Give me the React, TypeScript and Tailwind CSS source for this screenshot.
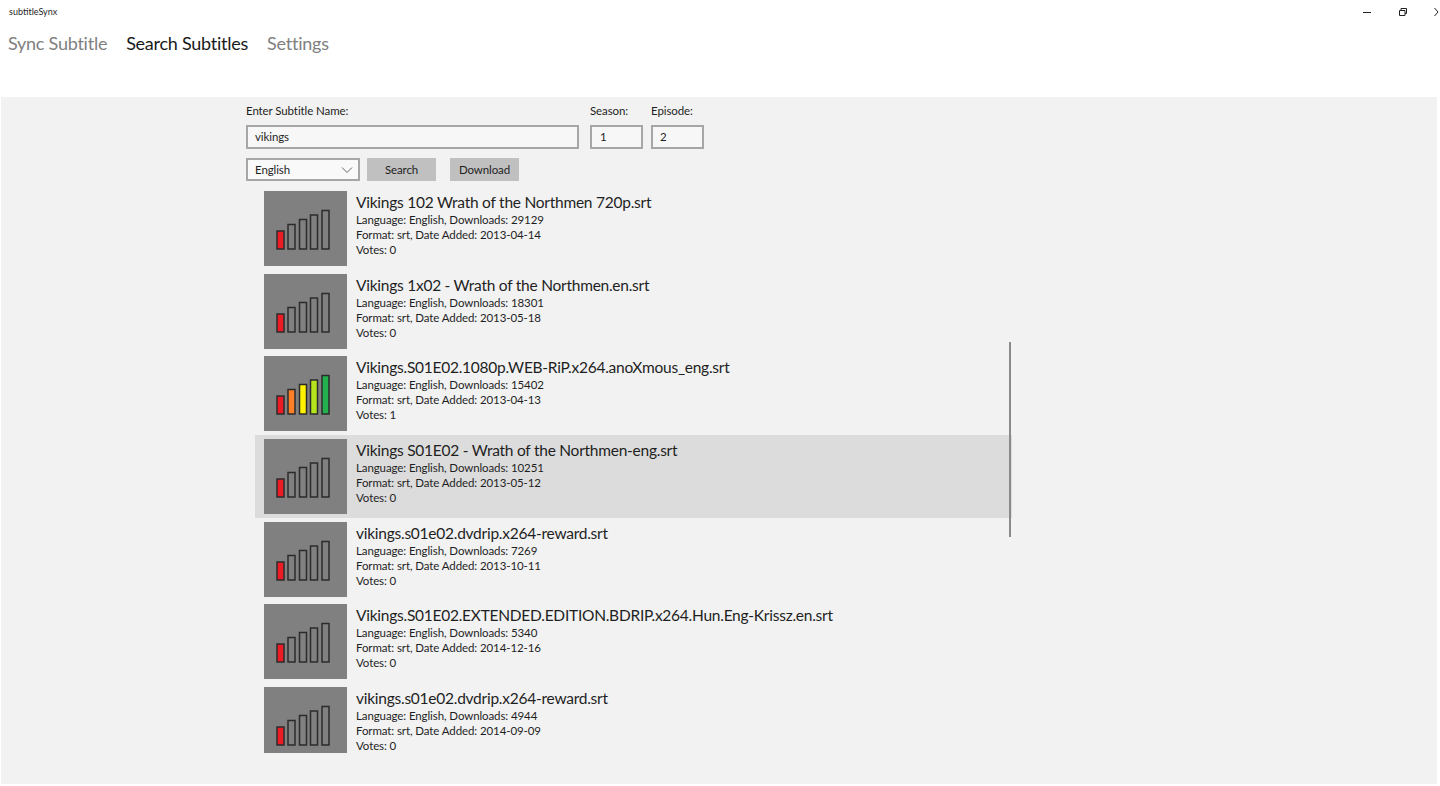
const results = [
  { title: "Vikings 102 Wrath of the Northmen 720p.srt", downloads: 29129, date: "2013-04-14", votes: 0 },
  { title: "Vikings 1x02 - Wrath of the Northmen.en.srt", downloads: 18301, date: "2013-05-18", votes: 0 },
  { title: "Vikings.S01E02.1080p.WEB-RiP.x264.anoXmous_eng.srt", downloads: 15402, date: "2013-04-13", votes: 1 },
  { title: "Vikings S01E02 - Wrath of the Northmen-eng.srt", downloads: 10251, date: "2013-05-12", votes: 0, selected: true },
  { title: "vikings.s01e02.dvdrip.x264-reward.srt", downloads: 7269, date: "2013-10-11", votes: 0 },
  { title: "Vikings.S01E02.EXTENDED.EDITION.BDRIP.x264.Hun.Eng-Krissz.en.srt", downloads: 5340, date: "2014-12-16", votes: 0 },
  { title: "vikings.s01e02.dvdrip.x264-reward.srt", downloads: 4944, date: "2014-09-09", votes: 0 },
];

const bars = [
  { x: 13, y: 40, h: 18, color: "#ed1c24" },
  { x: 24, y: 33.5, h: 24.5, color: "#ffffff00" },
  { x: 35.5, y: 28.5, h: 29.5, color: "#ffffff00" },
  { x: 46.5, y: 24, h: 34, color: "#ffffff00" },
  { x: 58, y: 19.5, h: 38.5, color: "#ffffff00" },
];
const ratedColors = ["#ed1c24", "#ff7f27", "#fff200", "#b5e61d", "#22b14c"];

function Rating({ votes }: { votes: number }) {
  return (
    <svg width="83" height="75" viewBox="0 0 83 75" className="shrink-0 bg-[#808080]">
      {bars.map((b, i) => (
        <rect
          key={i}
          x={b.x}
          y={b.y}
          width="7"
          height={b.h}
          fill={votes > 0 ? ratedColors[i] : b.color}
          stroke="#2b2b2b"
          strokeWidth="1.5"
        />
      ))}
    </svg>
  );
}

export default function App() {
  return (
    <div className="h-[786px] overflow-hidden bg-white font-['Lato',sans-serif] text-[#1f1f1f]">
      <header className="h-[97px]">
        <div className="flex h-[24px] items-center justify-between pl-[9px]">
          <span className="text-[9px]">subtitleSynx</span>
          <div className="flex items-center pr-px text-[#222]">
            <svg width="10" height="10" viewBox="0 0 10 10" className="mr-[26px]">
              <path d="M1 5.5h8" stroke="currentColor" />
            </svg>
            <svg width="10" height="10" viewBox="0 0 10 10" className="mr-[26px]">
              <path d="M1.5 3.500h5.500v5h-5.500zM3 3.500v-2h5.500v5h-1.500" stroke="currentColor" fill="none" />
            </svg>
            <svg width="5" height="10" viewBox="0 0 5 10">
              <path d="M0.500 1l3.500 4-3.500 4" stroke="currentColor" fill="none" />
            </svg>
          </div>
        </div>
        <nav className="mt-[5px] flex gap-[19px] pl-[8px] text-[18px] leading-[28px] tracking-[-0.25px]">
          <span className="text-[#808080]">Sync Subtitle</span>
          <span className="text-[#1a1a1a]">Search Subtitles</span>
          <span className="text-[#808080]">Settings</span>
        </nav>
      </header>

      <main className="ml-px mr-[3px] flex h-[687px] flex-col overflow-hidden bg-[#f2f2f2] pl-[245px]">
        <div className="mt-[7px] flex gap-[11px] text-[11.5px] tracking-[-0.1px]">
          <label className="flex w-[333px] flex-col">
            <span className="h-[21px] leading-[14px]">Enter Subtitle Name:</span>
            <input readOnly value="vikings" className="h-[24px] border-2 border-[#a6a6a6] bg-[#f7f7f7] pb-[2px] pl-[7px] outline-none" />
          </label>
          <label className="flex w-[53px] flex-col">
            <span className="h-[21px] leading-[14px]">Season:</span>
            <input readOnly value="1" className="h-[24px] w-full border-2 border-[#a6a6a6] bg-[#f7f7f7] pb-[2px] pl-[8px] outline-none" />
          </label>
          <label className="-ml-[3px] flex w-[53px] flex-col">
            <span className="h-[21px] leading-[14px]">Episode:</span>
            <input readOnly value="2" className="h-[24px] w-full border-2 border-[#a6a6a6] bg-[#f7f7f7] pb-[2px] pl-[7px] outline-none" />
          </label>
        </div>

        <div className="mt-[9px] flex text-[11.5px] tracking-[-0.1px]">
          <div className="flex h-[23px] w-[114px] items-center justify-between border-2 border-[#a6a6a6] bg-[#f9f9f9] pl-[7px] pr-[5px]">
            <span>English</span>
            <svg width="12" height="8" viewBox="0 0 12 8">
              <path d="M1 1.500l5 5 5-5" stroke="#666" fill="none" />
            </svg>
          </div>
          <button className="ml-[7px] h-[23px] w-[69px] bg-[#c0c0c0]">Search</button>
          <button className="ml-[14px] h-[23px] w-[69px] bg-[#c0c0c0]">Download</button>
        </div>

        <div className="relative ml-[9px] mt-[6px] h-[566px] w-[757px] overflow-hidden">
          {results.map((r, i) => (
            <div
              key={i}
              className={`flex h-[82.67px] items-start pl-[9px] pt-[4px] ${r.selected ? "bg-[#dcdcdc]" : ""}`}
            >
              <Rating votes={r.votes} />
              <div className="ml-[9px] mt-px text-[11.5px] leading-[15px] tracking-[-0.1px]">
                <div className="text-[15.5px] leading-[20px] tracking-[-0.25px]">{r.title}</div>
                <div>Language: English, Downloads: {r.downloads}</div>
                <div>Format: srt, Date Added: {r.date}</div>
                <div>Votes: {r.votes}</div>
              </div>
            </div>
          ))}
          {/* scrollbar thumb */}
          <div className="absolute left-[754px] top-[155px] h-[195px] w-[2px] bg-[#8a8a8a]" />
        </div>
      </main>
    </div>
  );
}
